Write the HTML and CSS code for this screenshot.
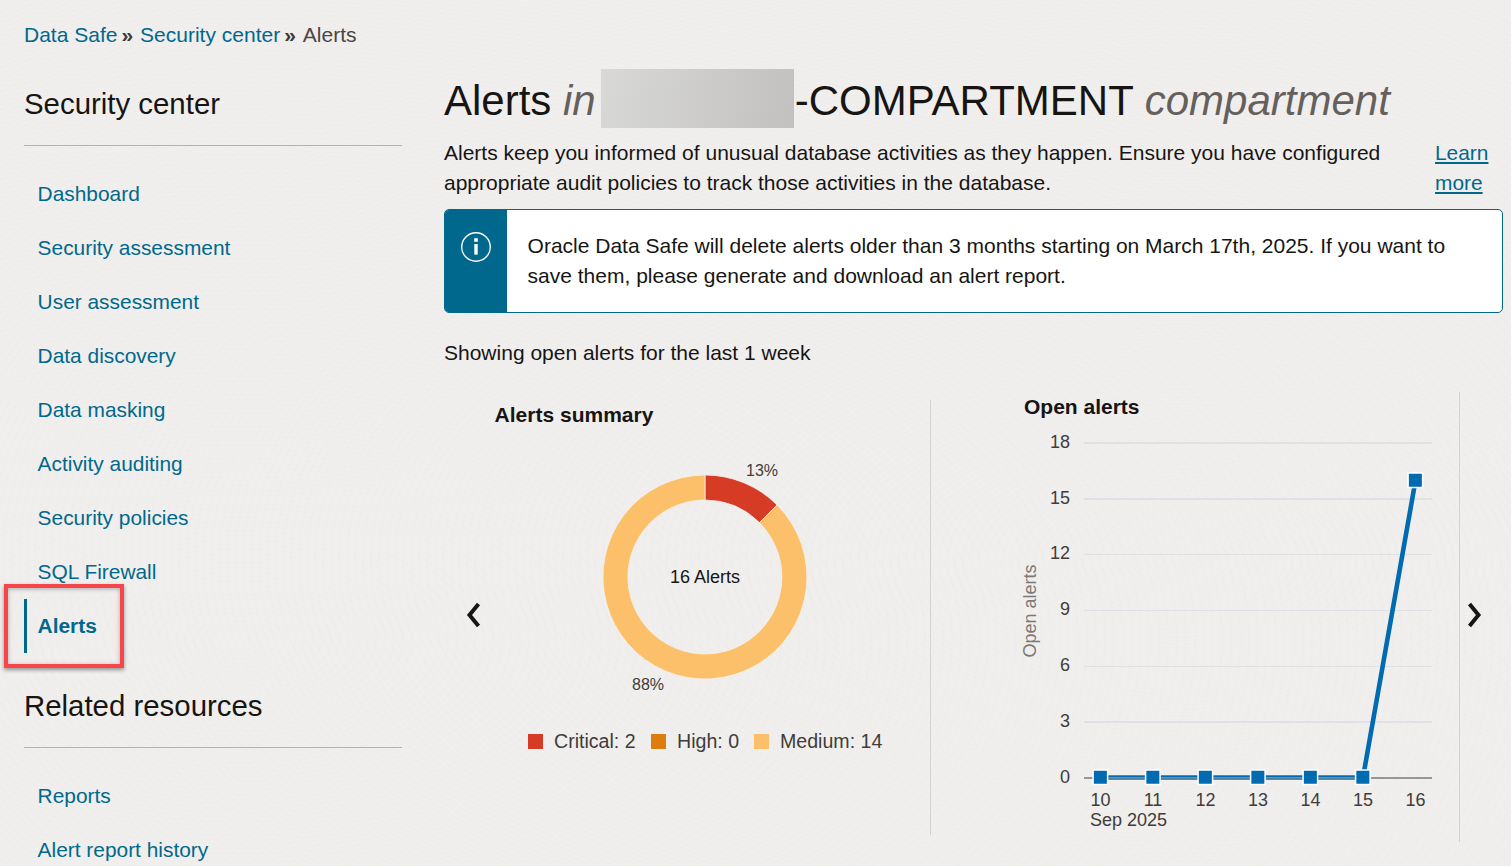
FILE: index.html
```html
<!DOCTYPE html>
<html lang="en">
<head>
<meta charset="utf-8">
<title>Alerts</title>
<link rel="stylesheet" href="styles.css">
</head>
<body>
<nav class="breadcrumb">
  <a href="#">Data Safe</a><span class="sep">»</span><a href="#">Security center</a><span class="sep">»</span><span class="current">Alerts</span>
</nav>
<div class="layout">
  <aside class="sidebar">
    <h2 class="side-title">Security center</h2>
    <ul class="side-list">
      <li><a class="side-link" href="#">Dashboard</a></li>
      <li><a class="side-link" href="#">Security assessment</a></li>
      <li><a class="side-link" href="#">User assessment</a></li>
      <li><a class="side-link" href="#">Data discovery</a></li>
      <li><a class="side-link" href="#">Data masking</a></li>
      <li><a class="side-link" href="#">Activity auditing</a></li>
      <li><a class="side-link" href="#">Security policies</a></li>
      <li><a class="side-link" href="#">SQL Firewall</a></li>
      <li><a class="side-link active" href="#">Alerts</a></li>
    </ul>
    <h2 class="side-title related">Related resources</h2>
    <ul class="side-list">
      <li><a class="side-link" href="#">Reports</a></li>
      <li><a class="side-link" href="#">Alert report history</a></li>
    </ul>
  </aside>
  <main class="main">
    <h1 class="page-title">Alerts <em>in</em><span class="redacted"></span>-COMPARTMENT <em>compartment</em></h1>
    <div class="intro">
      <p class="intro-text">Alerts keep you informed of unusual database activities as they happen. Ensure you have configured appropriate audit policies to track those activities in the database.</p>
      <a class="learn" href="#">Learn more</a>
    </div>
    <div class="banner">
      <div class="banner-icon">
        <svg width="32" height="32" viewBox="0 0 32 32" aria-hidden="true">
          <circle cx="16" cy="16" r="14.3" fill="none" stroke="#fff" stroke-width="1.4"/>
          <rect x="14.2" y="7.2" width="3.6" height="3.6" fill="#fff"/>
          <rect x="14.3" y="13" width="3.4" height="10.6" fill="#fff"/>
        </svg>
      </div>
      <p class="banner-text">Oracle Data Safe will delete alerts older than 3 months starting on March 17th, 2025. If you want to save them, please generate and download an alert report.</p>
    </div>
    <p class="showing">Showing open alerts for the last 1 week</p>
    <div class="carousel">
      <button class="nav-btn prev" aria-label="Previous">
        <svg width="16" height="26" viewBox="0 0 16 26"><path d="M13.5 2 L4.5 13 L13.5 24" fill="none" stroke="#161513" stroke-width="4"/></svg>
      </button>
      <section class="panel summary">
        <h3 class="panel-title">Alerts summary</h3>
        <svg class="chart" width="435" height="405" viewBox="495 430 435 405">
          <path d="M705 475 A102 102 0 0 1 777.1 504.9 L759.4 522.6 A77 77 0 0 0 705 500 Z" fill="#d63b25" stroke="#f4f1ee" stroke-width=".8"/>
          <path d="M777.1 504.9 A102 102 0 1 1 705 475 L705 500 A77 77 0 1 0 759.4 522.6 Z" fill="#fcc06a" stroke="#f4f1ee" stroke-width=".8"/>
          <text class="pct" x="746" y="476">13%</text>
          <text class="pct" x="632" y="690">88%</text>
          <text class="center" x="705" y="583" text-anchor="middle">16 Alerts</text>
          <rect x="528" y="734" width="15" height="15" fill="#d63b25"/>
          <text class="legend" x="554" y="748">Critical: 2</text>
          <rect x="651" y="734" width="15" height="15" fill="#dd7d10"/>
          <text class="legend" x="677" y="748">High: 0</text>
          <rect x="754" y="734" width="15" height="15" fill="#fcc06a"/>
          <text class="legend" x="780" y="748">Medium: 14</text>
        </svg>
      </section>
      <section class="panel trend">
        <h3 class="panel-title">Open alerts</h3>
        <svg class="chart" width="528" height="420" viewBox="931 422 528 420">
          <g stroke="#dfe1e6">
            <line x1="1084" x2="1432" y1="443" y2="443" stroke-width="2"/>
            <line x1="1084" x2="1432" y1="499" y2="499" stroke-width="2"/>
            <line x1="1084" x2="1432" y1="554.5" y2="554.5"/>
            <line x1="1084" x2="1432" y1="610.5" y2="610.5"/>
            <line x1="1084" x2="1432" y1="666.5" y2="666.5"/>
            <line x1="1084" x2="1432" y1="722" y2="722" stroke-width="2"/>
          </g>
          <line x1="1084" x2="1432" y1="778" y2="778" stroke="#979797" stroke-width="2"/>
          <g class="tick">
            <text x="1070" y="448" text-anchor="end">18</text>
            <text x="1070" y="504" text-anchor="end">15</text>
            <text x="1070" y="559" text-anchor="end">12</text>
            <text x="1070" y="615" text-anchor="end">9</text>
            <text x="1070" y="671" text-anchor="end">6</text>
            <text x="1070" y="727" text-anchor="end">3</text>
            <text x="1070" y="783" text-anchor="end">0</text>
            <text x="1100.5" y="806" text-anchor="middle">10</text>
            <text x="1153" y="806" text-anchor="middle">11</text>
            <text x="1205.5" y="806" text-anchor="middle">12</text>
            <text x="1258" y="806" text-anchor="middle">13</text>
            <text x="1310.5" y="806" text-anchor="middle">14</text>
            <text x="1363" y="806" text-anchor="middle">15</text>
            <text x="1415.5" y="806" text-anchor="middle">16</text>
            <text x="1090" y="826">Sep 2025</text>
          </g>
          <text class="axis-title" transform="translate(1036 611) rotate(-90)" text-anchor="middle">Open alerts</text>
          <path d="M1100.5 777.5 H1363" stroke="#fff" stroke-width="5.5" fill="none" opacity=".85"/>
          <path d="M1100.5 777.5 H1363 L1415.5 480.5" stroke="#006bb0" stroke-width="4.6" fill="none"/>
          <path d="M1100.5 777.8 H1363" stroke="#979797" stroke-width="1.3" fill="none"/>
          <g fill="#006bb0" stroke="#fff" stroke-width="1.5">
            <rect x="1093.1" y="770" width="14.5" height="14.5"/>
            <rect x="1145.6" y="770" width="14.5" height="14.5"/>
            <rect x="1198.1" y="770" width="14.5" height="14.5"/>
            <rect x="1250.6" y="770" width="14.5" height="14.5"/>
            <rect x="1303.1" y="770" width="14.5" height="14.5"/>
            <rect x="1355.6" y="770" width="14.5" height="14.5"/>
            <rect x="1408.1" y="473" width="14.5" height="14.5"/>
          </g>
        </svg>
      </section>
      <button class="nav-btn next" aria-label="Next">
        <svg width="16" height="26" viewBox="0 0 16 26"><path d="M2.5 2 L11.5 13 L2.5 24" fill="none" stroke="#161513" stroke-width="4"/></svg>
      </button>
    </div>
  </main>
</div>
</body>
</html>
```

FILE: styles.css
```css
html, body {
  margin: 0;
  height: 866px;
  overflow: hidden;
}
body {
  font-family: "Liberation Sans", Arial, sans-serif;
  font-size: 21px;
  line-height: 30px;
  color: #161513;
  background-color: #f1efed;
  background-image:
    repeating-radial-gradient(ellipse at 1180px 560px, rgba(120,110,100,.012) 0 2px, transparent 2px 8px),
    repeating-radial-gradient(ellipse at 240px 640px, rgba(120,110,100,.01) 0 2px, transparent 2px 9px);
}
a { color: #00688c; text-decoration: none; }
ul { list-style: none; margin: 0; padding: 0; }
p, h1, h2, h3 { margin: 0; }

.breadcrumb {
  height: 30px;
  padding: 20px 0 0 24px;
  display: flex;
  align-items: center;
}
.breadcrumb .sep { margin: 0 7px 0 4px; color: #3a3a3a; font-weight: 700; }
.breadcrumb .current { color: #4a4644; }

.layout {
  display: grid;
  grid-template-columns: 378px 1059px;
  column-gap: 42px;
  padding-left: 24px;
  align-items: start;
}
.sidebar { padding-top: 34px; }
.side-title {
  font-size: 29.4px;
  font-weight: 400;
  line-height: 40px;
  padding-bottom: 21px;
  border-bottom: 1px solid #b5b3b1;
  margin-bottom: 21px;
}
.side-title.related { margin-top: 33px; }
.side-link {
  display: flex;
  align-items: center;
  height: 54px;
  padding-left: 13.6px;
  font-size: 20.9px;
  position: relative;
}
.side-link.active {
  padding-left: 10.6px;
  border-left: 3px solid #00688c;
  font-weight: 700;
}
.side-link.active::after {
  content: "";
  position: absolute;
  left: -23px;
  top: -15px;
  width: 112px;
  height: 76px;
  border: 4px solid #f5474b;
  box-shadow: 0 2px 4px rgba(0,0,0,.4), inset 0 1px 4px rgba(0,0,0,.3);
}

.main { padding-top: 19px; }
.page-title {
  font-size: 42px;
  font-weight: 400;
  line-height: 64px;
  white-space: nowrap;
  height: 60px;
  margin-bottom: 9px;
}
.page-title em { color: #65605c; }
.redacted {
  display: inline-block;
  width: 193px;
  height: 59px;
  margin: 0 1px 0 5px;
  vertical-align: top;
  background: linear-gradient(100deg, #d8d8d7, #c2c1bf);
}
.intro { display: flex; }
.intro-text { width: 991px; flex: none; }
.learn { text-decoration: underline; width: 68px; font-size: 20.9px; }
.banner {
  display: flex;
  height: 104px;
  box-sizing: border-box;
  margin-top: 11px;
  border: 1px solid #00688c;
  border-radius: 5px;
  background: #fff;
  overflow: hidden;
}
.banner-icon {
  width: 62px;
  flex: none;
  background: #00688c;
  display: flex;
  justify-content: center;
  padding-top: 21px;
  box-sizing: border-box;
}
.banner-icon svg { display: block; }
.banner-text { padding: 21px 40px 0 20.6px; }
.showing { margin-top: 25px; }

.carousel {
  display: flex;
  align-items: flex-start;
  margin-top: 24px;
}
.nav-btn {
  background: none;
  border: 0;
  padding: 0;
  margin-top: 210px;
  line-height: 0;
}
.nav-btn.prev { width: 50.6px; padding-left: 21px; box-sizing: border-box; text-align: left; }
.nav-btn.next { margin-left: 7px; }
.panel { box-sizing: border-box; border-right: 1px solid #d4d2d0; }
.panel-title { font-size: 21px; font-weight: 700; line-height: 30px; }
.chart { display: block; }
.summary { width: 436.4px; height: 435px; margin-top: 8px; }
.trend { width: 529px; height: 450px; }
.trend .panel-title { padding-left: 93px; }
.pct { font-size: 16px; fill: #3f3c3a; }
.center { font-size: 18px; fill: #161513; }
.legend { font-size: 19.6px; fill: #3f3c3a; }
.tick text { font-size: 18px; fill: #3f3c3a; }
.axis-title { font-size: 18px; fill: #7c7875; }
```
